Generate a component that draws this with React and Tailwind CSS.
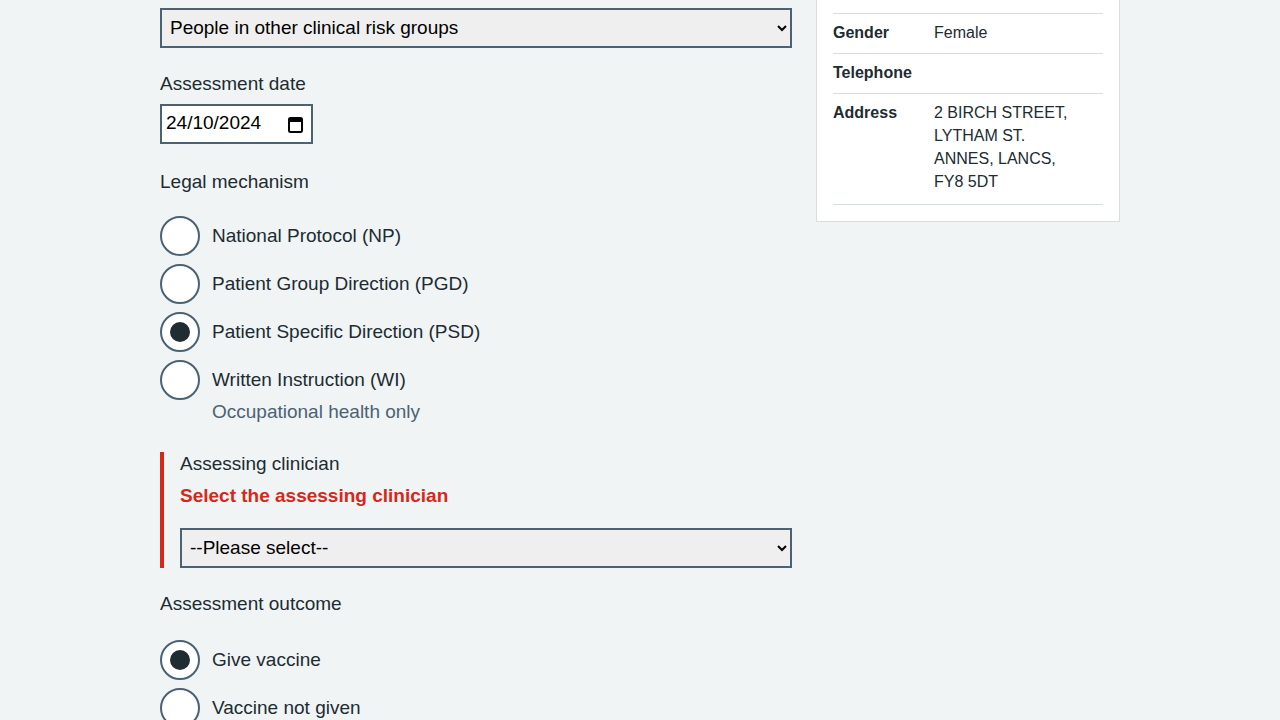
import React from 'react';

const FONT = { fontFamily: '"Liberation Sans", Arial, sans-serif' };

function Radio({ label, hint, checked, last }) {
    return (
        <div className={`flex items-start gap-3 ${last ? '' : 'mb-2'}`}>
            <span className="w-10 h-10 shrink-0 rounded-full border-2 border-[#4c6272] bg-white flex items-center justify-center">
                {checked && <span className="w-5 h-5 rounded-full bg-[#212b32]" />}
            </span>
            <div className="pt-[6px]">
                <div className="text-[19px] leading-7 text-[#212b32]">{label}</div>
                {hint && <div className="text-[19px] leading-7 text-[#4c6272] mt-1">{hint}</div>}
            </div>
        </div>
    );
}

function SummaryRow({ k, children, last }) {
    return (
        <div className={`flex border-b border-[#d8dde0] pt-[7px] text-base leading-[23px] text-[#212b32] ${last ? 'pb-[11px]' : 'pb-[9px]'}`}>
            <div className="w-[101px] shrink-0 font-bold">{k}</div>
            <div>{children}</div>
        </div>
    );
}

export default function App() {
    return (
        <div className="min-h-screen bg-[#f0f4f5] overflow-hidden" style={FONT}>
            <div className="w-[960px] mx-auto flex gap-6">
                {/* Left column: assessment form */}
                <div className="w-[632px] shrink-0 pt-2">
                    <select
                        defaultValue="risk"
                        className="w-full h-10 border-2 border-[#4c6272] bg-[#efefef] text-black text-[19px] leading-6 px-1 pb-0.5 mb-6"
                    >
                        <option value="risk">People in other clinical risk groups</option>
                    </select>

                    <div className="text-[19px] leading-6 pb-1 text-[#212b32] mb-1">Assessment date</div>
                    <div className="w-[153px] h-10 border-2 border-[#4c6272] bg-white flex items-center justify-between pl-1 pr-2 mb-6">
                        <span className="text-[19px] text-black pb-0.5">24/10/2024</span>
                        <svg width="15" height="17" viewBox="0 0 15 17" fill="none">
                            <rect x="1" y="2" width="13" height="14" rx="1.5" stroke="#000" strokeWidth="2" />
                            <rect x="1" y="2" width="13" height="4" fill="#000" />
                        </svg>
                    </div>

                    <div className="text-[19px] leading-7 text-[#212b32] mb-5">Legal mechanism</div>
                    <div className="mb-[26px]">
                        <Radio label="National Protocol (NP)" />
                        <Radio label="Patient Group Direction (PGD)" />
                        <Radio label="Patient Specific Direction (PSD)" checked />
                        <Radio label="Written Instruction (WI)" hint="Occupational health only" last />
                    </div>

                    {/* Error group */}
                    <div className="border-l-4 border-[#d5281b] pl-4">
                        <div className="text-[19px] leading-6 pb-1 text-[#212b32]">Assessing clinician</div>
                        <div className="text-[19px] leading-7 font-bold text-[#d5281b] mt-0.5 mb-[18px]">
                            Select the assessing clinician
                        </div>
                        <select
                            defaultValue=""
                            className="w-full h-10 border-2 border-[#4c6272] bg-[#efefef] text-black text-[19px] leading-6 px-1 pb-0.5"
                        >
                            <option value="">--Please select--</option>
                        </select>
                    </div>

                    <div className="text-[19px] leading-6 pb-1 text-[#212b32] mt-6 mb-5">Assessment outcome</div>
                    <div>
                        <Radio label="Give vaccine" checked />
                        <Radio label="Vaccine not given" last />
                    </div>
                </div>

                {/* Right column: patient details */}
                <div className="w-[304px] shrink-0">
                    <div className="-mt-1 bg-white border border-[#d8dde0] px-4 pt-4 pb-4">
                        <div className="border-t border-[#d8dde0]">
                            <SummaryRow k="Gender">Female</SummaryRow>
                            <SummaryRow k="Telephone"></SummaryRow>
                            <SummaryRow k="Address" last>
                                2 BIRCH STREET,
                                <br />
                                LYTHAM ST.
                                <br />
                                ANNES, LANCS,
                                <br />
                                FY8 5DT
                            </SummaryRow>
                        </div>
                    </div>
                </div>
            </div>
        </div>
    );
}
